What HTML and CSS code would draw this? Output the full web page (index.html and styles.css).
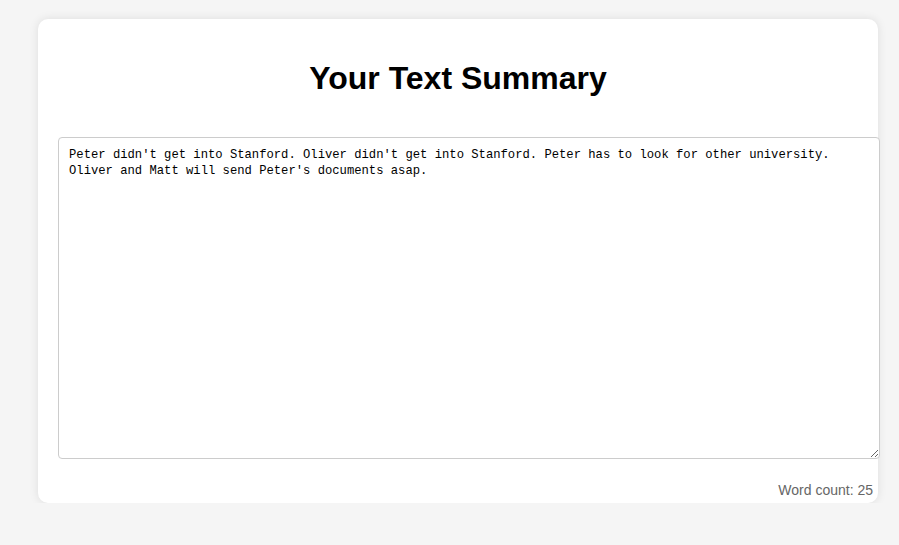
FILE: index.html
```html
<!DOCTYPE html>
<html lang="en">
<head>
<meta charset="utf-8">
<title>Your Text Summary</title>
<link rel="stylesheet" href="styles.css">
</head>
<body>
  <div class="card">
    <h1 class="title">Your Text Summary</h1>
    <textarea class="summary">Peter didn't get into Stanford. Oliver didn't get into Stanford. Peter has to look for other university. Oliver and Matt will send Peter's documents asap.</textarea>
    <div class="word-count">Word count: 25</div>
  </div>
</body>
</html>
```

FILE: styles.css
```css
html, body {
  margin: 0;
  padding: 0;
}

body {
  background: #f5f5f5;
  font-family: "Liberation Sans", Arial, sans-serif;
  padding: 19px 0 0 38px;
}

.card {
  width: 800px;
  padding: 20px 20px 5px 20px;
  background: #ffffff;
  border-radius: 10px;
  box-shadow: 0 0 10px rgba(0, 0, 0, 0.1);
}

.title {
  margin: 21px 0 40px 0;
  font-size: 32px;
  font-weight: bold;
  text-align: center;
  color: #000;
  line-height: 37px;
}

.summary {
  display: block;
  width: 100%;
  height: 300px;
  padding: 10px;
  margin: 0;
  border: 1px solid #cccccc;
  border-radius: 4px;
  font-family: "Liberation Mono", "DejaVu Sans Mono", monospace;
  font-size: 12.2px;
  line-height: 15.5px;
  color: #000;
  background: #fff;
  resize: vertical;
  box-sizing: content-box;
}

.word-count {
  margin: 23px -15px 0 0;
  text-align: right;
  font-size: 14px;
  line-height: 16px;
  color: #666666;
}
```
